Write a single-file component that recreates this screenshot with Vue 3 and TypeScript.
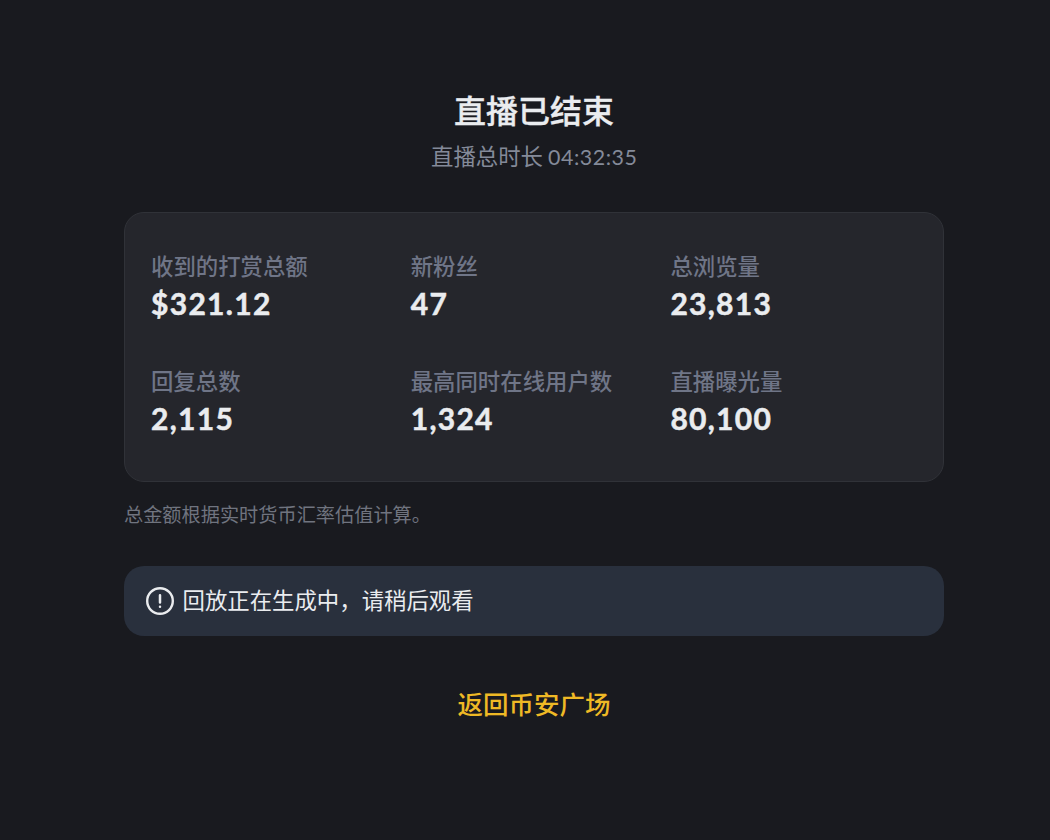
<script setup lang="ts">
interface Stat {
  label: string
  value: string
}

const stats: Stat[] = [
  { label: '收到的打赏总额', value: '$321.12' },
  { label: '新粉丝', value: '47' },
  { label: '总浏览量', value: '23,813' },
  { label: '回复总数', value: '2,115' },
  { label: '最高同时在线用户数', value: '1,324' },
  { label: '直播曝光量', value: '80,100' },
]
</script>

<template>
  <main class="page">
    <h1 class="title">直播已结束</h1>
    <p class="duration">直播总时长 <span class="time">04:32:35</span></p>
    <section class="card">
      <div v-for="s in stats" :key="s.label" class="stat">
        <div class="label">{{ s.label }}</div>
        <div class="value">{{ s.value }}</div>
      </div>
    </section>
    <p class="note">总金额根据实时货币汇率估值计算。</p>
    <div class="notice">
      <svg class="icon" viewBox="0 0 28 28" fill="none" stroke="currentColor" stroke-linecap="round">
        <circle cx="14" cy="14" r="12.8" stroke-width="2.4" />
        <path d="M14 8.2v7.2M14 19.7v.1" stroke-width="2.5" />
      </svg>
      <span class="notice-text">回放正在生成中<span class="comma">，</span>请稍后观看</span>
    </div>
    <button class="back" type="button">返回币安广场</button>
  </main>
</template>

<style>
body { background: #191a1f; }
</style>

<style scoped>
.page {
  box-sizing: border-box;
  width: 1050px;
  height: 840px;
  padding: 86px 106px 0 124px;
  background: #191a1f;
  color: #eaecef;
  display: flex;
  flex-direction: column;
}
.title {
  margin: 0;
  font: 500 32px/46px "Noto Sans CJK SC", sans-serif;
  text-align: center;
  -webkit-text-stroke: 0.35px currentColor;
}
.duration { margin: 6px 0 0; font: 400 22.4px/34px "Noto Sans CJK SC", sans-serif; color: #848a99; text-align: center; }
.time { font-family: Lato, sans-serif; font-size: 21.4px; letter-spacing: 0.55px; margin-right: -0.55px; }
.card {
  box-sizing: border-box;
  height: 270px;
  margin-top: 38px;
  padding: 34px 12px 0 26px;
  border: 1px solid #303238;
  border-radius: 20px;
  background: #25262c;
  display: grid;
  grid-template-columns: repeat(3, 259.7px);
  grid-auto-rows: 115px;
}
.label { font: 500 22.4px/36px "Noto Sans CJK SC", sans-serif; color: #6f7587; white-space: nowrap; }
.value {
  font: 700 30px/41px Lato, sans-serif;
  letter-spacing: 1.3px;
  white-space: nowrap;
  -webkit-text-stroke: 0.5px currentColor;
}
.note { margin: 18px 0 0; font: 400 19.2px/28px "Noto Sans CJK SC", sans-serif; color: #70747f; }
.notice {
  box-sizing: border-box;
  height: 70px;
  margin-top: 38px;
  padding-left: 22px;
  border-radius: 20px;
  background: #29303d;
  display: flex;
  align-items: center;
  gap: 8.5px;
  font: 400 22.4px/34px "Noto Sans CJK SC", sans-serif;
}
.notice-text { padding-bottom: 4px; }
.icon { width: 28px; height: 28px; }
.back {
  align-self: center;
  margin: 48px 0 0;
  padding: 0;
  border: 0;
  background: none;
  color: #efb925;
  font: 500 25.5px/38px "Noto Sans CJK SC", sans-serif;
}
</style>
